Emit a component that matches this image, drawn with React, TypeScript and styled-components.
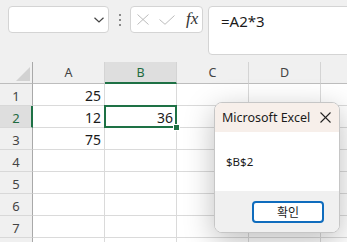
import React from "react";
import styled, { createGlobalStyle } from "styled-components";

const Global = createGlobalStyle`
  html, body { margin: 0; padding: 0; background: #f0f0f0; }
  body { font-family: "Noto Sans", "Open Sans", sans-serif; color: #222; }
  * { box-sizing: border-box; }
`;

const Window = styled.div`
  position: relative;
  width: 347px;
  height: 242px;
  overflow: hidden;
  background: #f0f0f0;
`;

const FormulaBar = styled.div`
  display: flex;
  align-items: flex-start;
  height: 62px;
  padding: 6px 0 0 8px;
`;

const NameBox = styled.div`
  width: 101px;
  height: 27px;
  background: #fff;
  border: 1px solid #d4d4d4;
  border-radius: 4px;
  display: flex;
  align-items: center;
  justify-content: flex-end;
  padding-right: 4px;
`;

const Grip = styled.div`
  width: 21px;
  height: 27px;
  display: flex;
  flex-direction: column;
  align-items: center;
  justify-content: center;
  gap: 3px;
`;

const GripDot = styled.span`
  width: 2px;
  height: 2px;
  background: #8a8a8a;
`;

const FxGroup = styled.div`
  width: 73px;
  height: 27px;
  background: #fff;
  border: 1px solid #d4d4d4;
  border-radius: 4px;
  display: flex;
  align-items: center;
  padding-left: 6px;
`;

const FxIcon = styled.span<{ $gap: number }>`
  display: flex;
  align-items: center;
  margin-right: ${(p) => p.$gap}px;
`;

const FxText = styled.span`
  font-family: "Liberation Serif", "DejaVu Serif", serif;
  font-style: italic;
  font-size: 17px;
  color: #333;
  line-height: 1;
  margin-top: -2px;
`;

const FormulaInput = styled.div`
  flex: 1;
  height: 49px;
  margin-left: 5px;
  margin-right: -10px;
  background: #fff;
  border: 1px solid #d4d4d4;
  border-radius: 4px;
  padding: 3px 0 0 12px;
  font-size: 15px;
  line-height: 22px;
  color: #1b1b1b;
`;

const Sheet = styled.div`
  display: grid;
  grid-template-columns: 33px repeat(5, 72px);
  grid-auto-rows: 22px;
`;

const Corner = styled.div`
  position: relative;
  background: #f0f0f0;
  border-right: 1px solid #a9a9a9;
  border-bottom: 1px solid #bdbdbd;
  &::after {
    content: "";
    position: absolute;
    right: 2px;
    bottom: 2px;
    width: 0;
    height: 0;
    border-left: 14px solid transparent;
    border-bottom: 14px solid #d2d2d2;
  }
`;

const ColHeader = styled.div<{ $active?: boolean }>`
  display: flex;
  align-items: center;
  justify-content: center;
  background: ${(p) => (p.$active ? "#dedede" : "#f0f0f0")};
  border-right: 1px solid #d4d4d4;
  border-bottom: ${(p) => (p.$active ? "2px solid #1e7145" : "1px solid #bdbdbd")};
  color: ${(p) => (p.$active ? "#1e6b41" : "#444")};
  font-size: 12.5px;
  padding-top: ${(p) => (p.$active ? "1px" : "0")};
`;

const RowHeader = styled.div<{ $active?: boolean }>`
  display: flex;
  align-items: center;
  justify-content: center;
  background: ${(p) => (p.$active ? "#dedede" : "#f0f0f0")};
  border-right: ${(p) => (p.$active ? "2px solid #1e7145" : "1px solid #a9a9a9")};
  border-bottom: 1px solid #d8d8d8;
  color: ${(p) => (p.$active ? "#1e6b41" : "#444")};
  font-size: 13px;
  padding-top: 2px;
  padding-left: ${(p) => (p.$active ? "1px" : "0")};
`;

const Cell = styled.div<{ $selected?: boolean }>`
  position: relative;
  display: flex;
  align-items: center;
  justify-content: flex-end;
  background: #fff;
  border-right: 1px solid #dadada;
  border-bottom: 1px solid #dadada;
  padding: 2px 3px 0 0;
  font-size: 14px;
  color: #1b1b1b;
  ${(p) =>
    p.$selected &&
    `
    &::before {
      content: "";
      position: absolute;
      top: -1px;
      left: -1px;
      right: -1px;
      bottom: -1px;
      border: 2px solid #1e7145;
      z-index: 2;
    }
    &::after {
      content: "";
      position: absolute;
      right: -4px;
      bottom: -4px;
      width: 5px;
      height: 5px;
      background: #1e7145;
      border: 1px solid #fff;
      z-index: 3;
    }
  `}
`;

const Dialog = styled.div`
  position: absolute;
  left: 214px;
  top: 102px;
  width: 126px;
  height: 131px;
  background: #fff;
  border: 1px solid #c6c6c6;
  border-radius: 8px;
  overflow: hidden;
  box-shadow: 0 8px 30px rgba(0, 0, 0, 0.26);
  display: flex;
  flex-direction: column;
  z-index: 10;
`;

const DialogTitle = styled.div`
  height: 29px;
  display: flex;
  align-items: center;
  justify-content: space-between;
  padding: 0 8px 0 7px;
  background: #f7efea;
  font-size: 12.5px;
  color: #1b1b1b;
`;

const DialogBody = styled.div`
  flex: 1;
  display: flex;
  align-items: center;
  padding-left: 11px;
  font-size: 11.5px;
  color: #1b1b1b;
`;

const DialogFooter = styled.div`
  height: 41px;
  display: flex;
  align-items: center;
  justify-content: flex-end;
  padding-right: 15px;
  background: #f0f0f0;
`;

const OkButton = styled.button`
  width: 72px;
  height: 22px;
  background: #fff;
  border: 2px solid #0f6cbd;
  border-radius: 4px;
  font-family: "Noto Sans CJK KR", "Noto Sans", sans-serif;
  font-size: 12px;
  color: #1b1b1b;
  padding: 0;
  display: flex;
  align-items: center;
  justify-content: center;
`;

const cols = ["A", "B", "C", "D", "E"];
const visibleCols = ["A", "B", "C", "D"];
const data: Record<string, string> = { A1: "25", A2: "12", A3: "75", B2: "36" };

export default function App() {
  const rows = [1, 2, 3, 4, 5, 6, 7, 8];
  return (
    <>
      <Global />
      <Window>
        <FormulaBar>
          <NameBox>
            <svg width="10" height="6" viewBox="0 0 10 6">
              <polyline points="0.5,0.8 5,5 9.5,0.8" fill="none" stroke="#444" strokeWidth="1.2" />
            </svg>
          </NameBox>
          <Grip>
            <GripDot />
            <GripDot />
            <GripDot />
          </Grip>
          <FxGroup>
            <FxIcon $gap={10}>
              <svg width="12" height="11" viewBox="0 0 12 11">
                <line x1="0.5" y1="0.5" x2="11.5" y2="10.5" stroke="#bcbcbc" strokeWidth="1" />
                <line x1="11.5" y1="0.5" x2="0.5" y2="10.5" stroke="#bcbcbc" strokeWidth="1" />
              </svg>
            </FxIcon>
            <FxIcon $gap={11}>
              <svg width="16" height="10" viewBox="0 0 16 10">
                <polyline points="0.5,4.5 6,9.3 15.5,0.5" fill="none" stroke="#bcbcbc" strokeWidth="1" />
              </svg>
            </FxIcon>
            <FxText>fx</FxText>
          </FxGroup>
          <FormulaInput>=A2*3</FormulaInput>
        </FormulaBar>
        <Sheet>
          <Corner />
          {cols.map((c) => (
            <ColHeader key={c} $active={c === "B"}>
              {visibleCols.includes(c) ? c : ""}
            </ColHeader>
          ))}
          {rows.map((r) => (
            <React.Fragment key={r}>
              <RowHeader $active={r === 2}>{r < 8 ? r : ""}</RowHeader>
              {cols.map((c) => (
                <Cell key={c} $selected={c === "B" && r === 2}>
                  {data[`${c}${r}`] ?? ""}
                </Cell>
              ))}
            </React.Fragment>
          ))}
        </Sheet>
        <Dialog>
          <DialogTitle>
            <span>Microsoft Excel</span>
            <svg width="11" height="11" viewBox="0 0 11 11">
              <line x1="0.5" y1="0.5" x2="10.5" y2="10.5" stroke="#222" strokeWidth="1.1" />
              <line x1="10.5" y1="0.5" x2="0.5" y2="10.5" stroke="#222" strokeWidth="1.1" />
            </svg>
          </DialogTitle>
          <DialogBody>$B$2</DialogBody>
          <DialogFooter>
            <OkButton>확인</OkButton>
          </DialogFooter>
        </Dialog>
      </Window>
    </>
  );
}
